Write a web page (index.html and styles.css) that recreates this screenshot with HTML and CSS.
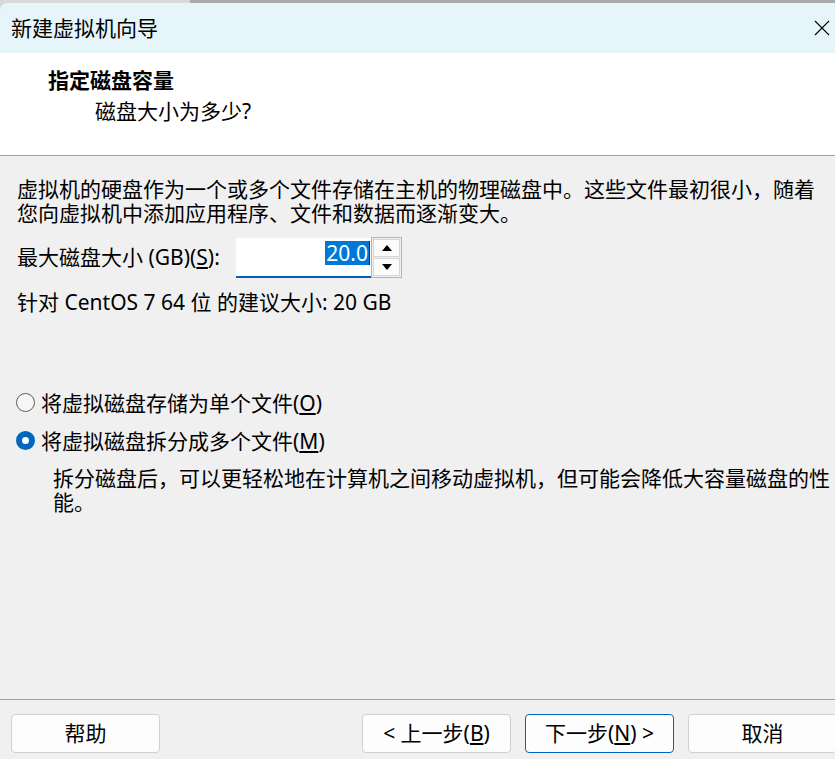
FILE: index.html
```html
<!DOCTYPE html>
<html lang="zh-CN">
<head>
<meta charset="utf-8">
<title>新建虚拟机向导</title>
<link rel="stylesheet" href="styles.css">
</head>
<body>
<div class="window">
  <div class="titlebar">
    <span class="title">新建虚拟机向导</span>
    <svg class="close" width="16" height="16" viewBox="0 0 16 16"><path d="M1 1L15 15M15 1L1 15" stroke="#000" stroke-width="1.1" fill="none"/></svg>
  </div>
  <div class="header">
    <div class="h-title">指定磁盘容量</div>
    <div class="h-sub">磁盘大小为多少?</div>
  </div>
  <div class="content">
    <p class="intro">虚拟机的硬盘作为一个或多个文件存储在主机的物理磁盘中。这些文件最初很小，随着<br>您向虚拟机中添加应用程序、文件和数据而逐渐变大。</p>
    <div class="size-row">
      <label class="size-label">最大磁盘大小 (GB)(<u>S</u>):</label>
      <div class="num-input"><span class="sel">20.0</span><span class="caret"></span></div>
      <div class="spinner">
        <div class="spin-btn"><svg width="10" height="6" viewBox="0 0 10 6"><path d="M0 6L5 0L10 6Z" fill="#000"/></svg></div>
        <div class="spin-btn"><svg width="10" height="6" viewBox="0 0 10 6"><path d="M0 0L10 0L5 6Z" fill="#000"/></svg></div>
      </div>
    </div>
    <p class="recommend">针对 CentOS 7 64 位 的建议大小: 20 GB</p>
    <div class="radio-row first"><span class="radio"></span><span class="radio-text">将虚拟磁盘存储为单个文件(<u>O</u>)</span></div>
    <div class="radio-row second"><span class="radio checked"></span><span class="radio-text">将虚拟磁盘拆分成多个文件(<u>M</u>)</span></div>
    <p class="desc">拆分磁盘后，可以更轻松地在计算机之间移动虚拟机，但可能会降低大容量磁盘的性<br>能。</p>
  </div>
  <div class="footer">
    <button class="btn">帮助</button>
    <div class="nav">
      <button class="btn">&lt; 上一步(<u>B</u>)</button>
      <button class="btn primary">下一步(<u>N</u>) &gt;</button>
      <button class="btn">取消</button>
    </div>
  </div>
</div>
</body>
</html>
```

FILE: styles.css
```css
* { box-sizing: border-box; }
html, body { margin: 0; padding: 0; }
body {
  width: 835px;
  height: 759px;
  overflow: hidden;
  background: linear-gradient(to right, #d9d9d9 0, #d9d9d9 190px, #a8a8a8 190px);
  font-family: "Noto Sans", "Noto Sans CJK SC", sans-serif;
  font-size: 21px;
  color: #000;
}
.window {
  margin-top: 3px;
  height: 756px;
  border-radius: 8px 0 0 0;
  overflow: hidden;
  display: flex;
  flex-direction: column;
  background: #f0f0f0;
}
.titlebar {
  height: 50px;
  flex: none;
  background: #e6f5f9;
  display: flex;
  align-items: center;
  justify-content: space-between;
  padding: 0 5px 0 11px;
}
.title { line-height: 21px; }
.close { display: block; }
.header {
  height: 103px;
  flex: none;
  background: #fff;
  border-bottom: 1px solid #a0a0a0;
  padding: 17px 0 0 48px;
}
.h-title { font-weight: 700; line-height: 21px; }
.h-sub { line-height: 21px; margin-top: 10px; padding-left: 47px; }
.content {
  flex: 1;
  padding: 21px 4px 0 17px;
}
.intro { margin: 0; line-height: 24px; }
.size-row {
  display: flex;
  align-items: center;
  margin-top: 12px;
  height: 41px;
}
.size-label { width: 219px; line-height: 21px; flex: none; }
.num-input {
  width: 135px;
  height: 40px;
  flex: none;
  background: #fff;
  border-bottom: 2px solid #005fb8;
  display: flex;
  justify-content: flex-end;
  align-items: flex-start;
  padding: 3px 1px 0 0;
}
.sel {
  background: #0078d7;
  color: #fff;
  line-height: 24px;
  height: 24px;
  padding: 0 1px;
}
.caret { width: 1px; height: 24px; background: #222; }
.spinner {
  width: 31px;
  height: 41px;
  flex: none;
  border: 1px solid #b4b4b4;
  padding: 1px;
  display: flex;
  flex-direction: column;
  gap: 1px;
}
.spin-btn {
  flex: 1;
  border: 1px solid #d6d6d6;
  background: #fbfbfb;
  display: flex;
  align-items: center;
  justify-content: center;
}
.spin-btn svg { display: block; }
.recommend { margin: 14px 0 0; line-height: 21px; }
.radio-row {
  display: flex;
  align-items: center;
  line-height: 21px;
  height: 21px;
}
.radio-row.first { margin-top: 80px; }
.radio-row.second { margin-top: 17px; }
.radio {
  width: 19px;
  height: 19px;
  flex: none;
  border-radius: 50%;
  border: 1px solid #5c5c5c;
  background: #f6f6f6;
  margin: -2px 6px 0 -1px;
}
.radio.checked {
  border: 6px solid #0067c0;
  background: #fff;
}
.desc { margin: 14px 0 0; padding-left: 36px; line-height: 24px; }
.footer {
  flex: none;
  height: 60px;
  border-top: 1px solid #a0a0a0;
  padding: 14px 0 0 11px;
  display: flex;
  align-items: flex-start;
}
.nav {
  margin-left: auto;
  margin-right: -2px;
  display: flex;
  gap: 14px;
}
.btn {
  width: 149px;
  height: 39px;
  border: 1px solid #d0d0d0;
  border-radius: 4px;
  background: #fdfdfd;
  font: inherit;
  color: #000;
  padding: 0;
  line-height: 21px;
}
.btn.primary { border-color: #0067c0; }
```
